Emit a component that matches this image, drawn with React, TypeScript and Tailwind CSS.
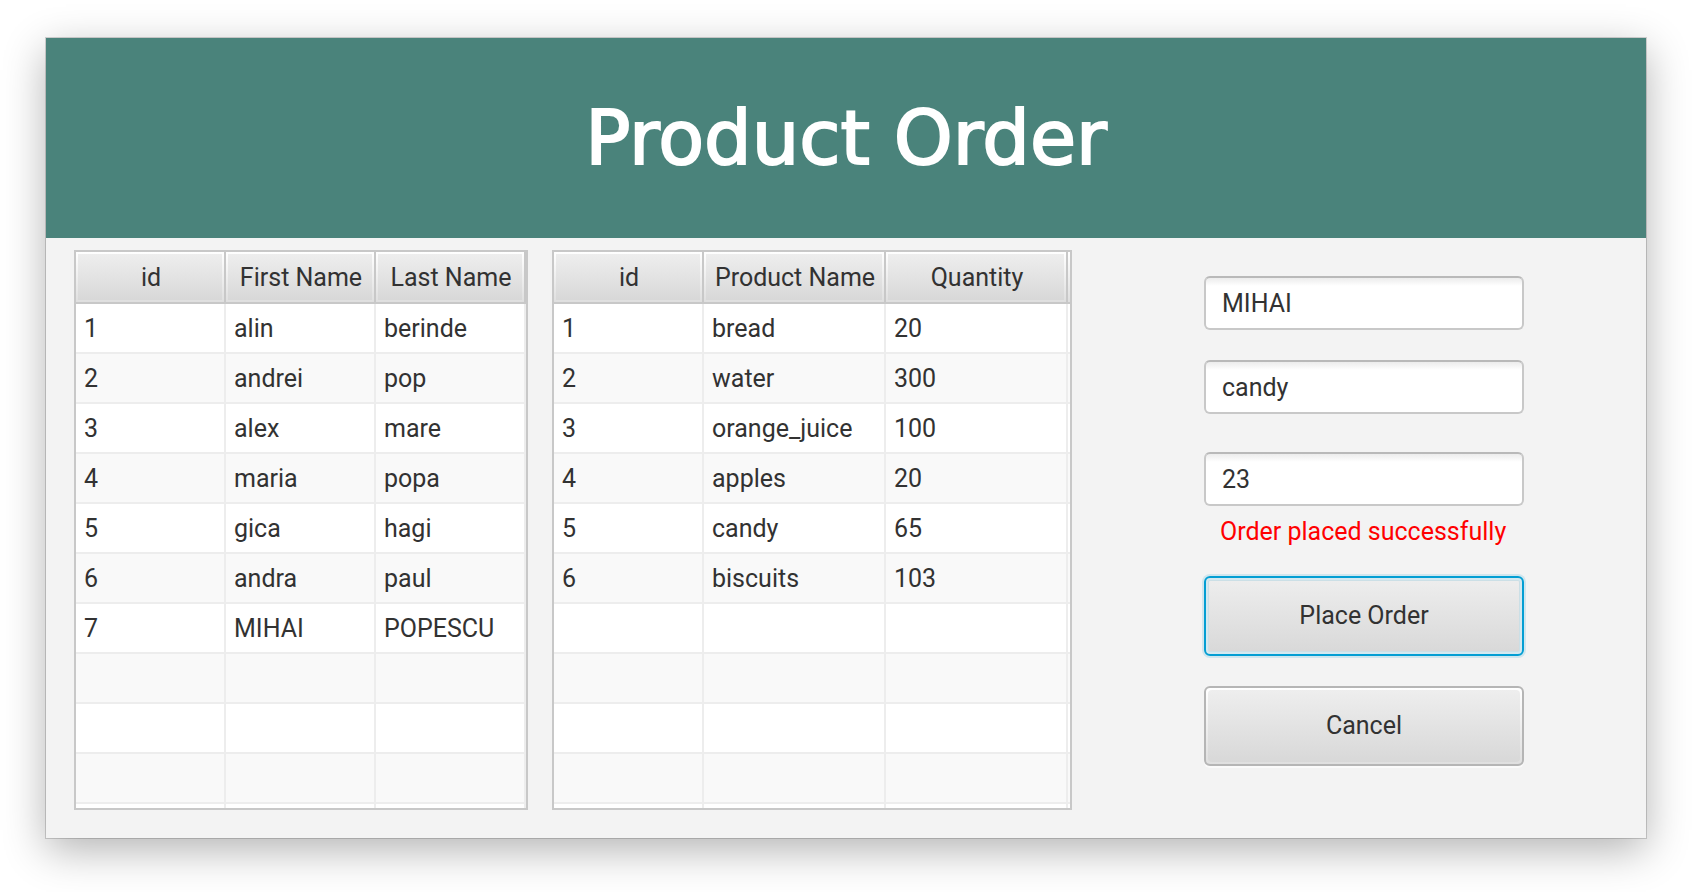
import { useState } from "react";

type Column = { title: string; width: string };

type GridProps = {
  label: string;
  columns: Column[];
  rows: string[][];
  filler?: boolean;
};

const VISIBLE_ROWS = 10;

function HeaderFace({ children }: { children?: string }) {
  return (
    <div className="h-[50px] bg-linear-to-b from-white to-[#dfdfdf] p-0.5">
      <div className="flex h-full items-center justify-center bg-linear-to-b from-[#eeeeee] to-[#d8d8d8] pt-0.5 pl-0.5 whitespace-nowrap">
        {children}
      </div>
    </div>
  );
}

function DataGrid({ label, columns, rows, filler = false }: GridProps) {
  const padded = Array.from({ length: VISIBLE_ROWS }, (_, i) => rows[i] ?? columns.map(() => ""));
  return (
    <div className="shrink-0 border-2 border-[#c8c8c8] bg-white">
      <table aria-label={label} className="table-fixed border-separate border-spacing-0">
        <thead>
          <tr>
            {columns.map((c) => (
              <th key={c.title} scope="col" className={`${c.width} border-r-2 border-b-2 border-[#c8c8c8] p-0 font-normal`}>
                <HeaderFace>{c.title}</HeaderFace>
              </th>
            ))}
            {filler && (
              <td className="w-0.5 border-b-2 border-[#c8c8c8] bg-linear-to-b from-white to-[#dfdfdf] p-0" />
            )}
          </tr>
        </thead>
        <tbody>
          {padded.map((row, r) => (
            <tr key={r} className="h-[50px] odd:bg-white even:bg-[#f9f9f9]">
              {row.map((value, c) => (
                <td key={c} className="border-r-2 border-b-2 border-[#ededed] pt-0.5 pr-0 pb-0 pl-2 whitespace-nowrap">
                  {value}
                </td>
              ))}
              {filler && <td className="border-b-2 border-[#ededed] p-0" />}
            </tr>
          ))}
          <tr className="h-1">
            {columns.map((c) => (
              <td key={c.title} className="border-r-2 border-[#ededed] p-0" />
            ))}
            {filler && <td className="p-0" />}
          </tr>
        </tbody>
      </table>
    </div>
  );
}

function Field({ label, initial, className }: { label: string; initial: string; className: string }) {
  const [value, setValue] = useState(initial);
  return (
    <input
      type="text"
      aria-label={label}
      value={value}
      onChange={(e) => setValue(e.target.value)}
      className={`${className} h-[54px] w-full rounded-md border-2 border-[#c8c8c8] border-t-[#b9b9b9] bg-white bg-linear-to-b from-[#ececec] to-white to-[8px] px-4 outline-none`}
    />
  );
}

const customerColumns: Column[] = [
  { title: "id", width: "w-[150px]" },
  { title: "First Name", width: "w-[150px]" },
  { title: "Last Name", width: "w-[150px]" },
];

const customers = [
  ["1", "alin", "berinde"],
  ["2", "andrei", "pop"],
  ["3", "alex", "mare"],
  ["4", "maria", "popa"],
  ["5", "gica", "hagi"],
  ["6", "andra", "paul"],
  ["7", "MIHAI", "POPESCU"],
];

const productColumns: Column[] = [
  { title: "id", width: "w-[150px]" },
  { title: "Product Name", width: "w-[182px]" },
  { title: "Quantity", width: "w-[182px]" },
];

const products = [
  ["1", "bread", "20"],
  ["2", "water", "300"],
  ["3", "orange_juice", "100"],
  ["4", "apples", "20"],
  ["5", "candy", "65"],
  ["6", "biscuits", "103"],
];

export default function App() {
  return (
    <div className="min-h-screen bg-white px-[46px] pt-[38px] pb-[54px]">
      <main className="bg-[#f3f3f3] font-['Roboto',sans-serif] text-[25px] leading-8 text-[#323232] shadow-[0_0_0_1px_rgba(0,0,0,0.16),0_12px_40px_rgba(0,0,0,0.3)]">
        <header className="flex h-[200px] items-center justify-center bg-[#4a837b]">
          <h1 className="font-['Chalkboard_SE','Chalkboard','Comic_Sans_MS','DejaVu_Sans',sans-serif] text-[75px] leading-none text-white [-webkit-text-stroke:2px_white]">
            Product Order
          </h1>
        </header>
        <div className="flex items-start pt-3 pb-7 pl-7">
          <DataGrid label="Customers" columns={customerColumns} rows={customers} />
          <div className="w-6 shrink-0" />
          <DataGrid label="Products" columns={productColumns} rows={products} filler />
          <form className="flex flex-1 justify-center pt-[26px] pl-2.5" onSubmit={(e) => e.preventDefault()}>
            <div className="flex w-80 flex-col">
              <Field label="Customer" initial="MIHAI" className="mb-[30px]" />
              <Field label="Product" initial="candy" className="mb-[38px]" />
              <Field label="Quantity" initial="23" className="mb-2.5" />
              <p role="status" className="mb-7 pl-4 whitespace-nowrap text-[#ff0000]">
                Order placed successfully
              </p>
              <button
                type="submit"
                className="mb-[30px] h-20 rounded-md border-2 border-[#039ed3] bg-linear-to-b from-[#eeeeee] to-[#d8d8d8] shadow-[0_0_0_2px_#cfe6ee,inset_0_0_0_2px_rgba(214,235,243,0.8),inset_0_0_0_3px_#cbdfe6]"
              >
                Place Order
              </button>
              <button
                type="button"
                className="h-20 rounded-md border-2 border-[#b5b5b5] bg-linear-to-b from-white to-[#dfdfdf] p-0.5 shadow-[0_2px_0_#fafafa]"
              >
                <span className="flex h-full items-center justify-center rounded-sm bg-linear-to-b from-[#eeeeee] to-[#d8d8d8]">
                  Cancel
                </span>
              </button>
            </div>
          </form>
        </div>
      </main>
    </div>
  );
}
